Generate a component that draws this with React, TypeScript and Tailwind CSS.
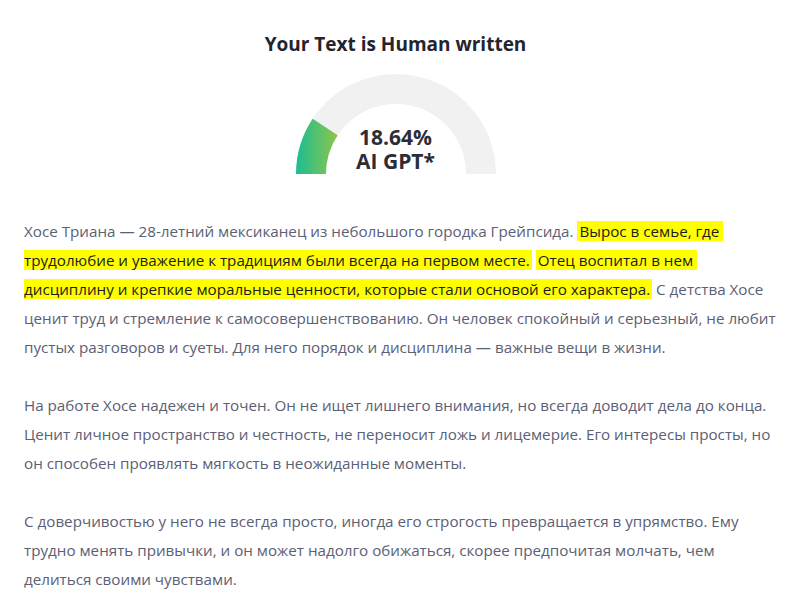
import React from 'react'

const HL = 'bg-[#ffff00] text-[#1c1c1c] px-[2px]'

function Gauge() {
  return (
    <div className="relative mx-auto mt-4 h-[101px] w-[200px]">
      <svg width="200" height="101" viewBox="0 0 200 101">
        <defs>
          <linearGradient id="g" x1="0" y1="0" x2="1" y2="0">
            <stop offset="0" stopColor="#1cbd92" />
            <stop offset="1" stopColor="#8fc54a" />
          </linearGradient>
        </defs>
        <path d="M0,100 A100,100 0 0 1 200,100 L170,100 A70,70 0 0 0 30,100 Z" fill="#f1f1f1" />
        <path d="M0,100 A100,100 0 0 1 16.66,44.73 L41.66,61.31 A70,70 0 0 0 30,100 Z" fill="url(#g)" />
      </svg>
      {/* value label */}
      <div className="absolute inset-0 flex flex-col items-center justify-end pb-[2px]">
        <p className="text-center text-[21px] font-bold leading-[24px] text-[#2d2d37]">
          18.64%
          <br />
          AI GPT*
        </p>
      </div>
    </div>
  )
}

export default function App() {
  return (
    <div
      className="min-h-[598px] bg-white px-6 pt-[30px]"
      style={{ fontFamily: '"Open Sans", "Noto Sans", sans-serif' }}
    >
      <h1 className="text-center text-[19px] font-bold leading-7 text-[#24242e]">
        Your Text is Human written
      </h1>
      <Gauge />

      <div className="mt-[42px] whitespace-nowrap text-[15.2px] leading-[29px] text-[#5b6075]">
        <p>
          Хосе Триана — 28-летний мексиканец из небольшого городка Грейпсида.{' '}
          <span className={HL}>
            Вырос в семье, где{'\u00a0'}
            <br />
            трудолюбие и уважение к традициям были всегда на первом месте.
          </span>{' '}
          <span className={HL}>
            Отец воспитал в нем{'\u00a0'}
            <br />
            дисциплину и крепкие моральные ценности, которые стали основой его характера.
          </span>{' '}
          С детства Хосе
          <br />
          ценит труд и стремление к самосовершенствованию. Он человек спокойный и серьезный, не любит
          <br />
          пустых разговоров и суеты. Для него порядок и дисциплина — важные вещи в жизни.
        </p>

        <p className="mt-[29px]">
          На работе Хосе надежен и точен. Он не ищет лишнего внимания, но всегда доводит дела до конца.
          <br />
          Ценит личное пространство и честность, не переносит ложь и лицемерие. Его интересы просты, но
          <br />
          он способен проявлять мягкость в неожиданные моменты.
        </p>

        <p className="mt-[29px]">
          С доверчивостью у него не всегда просто, иногда его строгость превращается в упрямство. Ему
          <br />
          трудно менять привычки, и он может надолго обижаться, скорее предпочитая молчать, чем
          <br />
          делиться своими чувствами.
        </p>
      </div>
    </div>
  )
}
